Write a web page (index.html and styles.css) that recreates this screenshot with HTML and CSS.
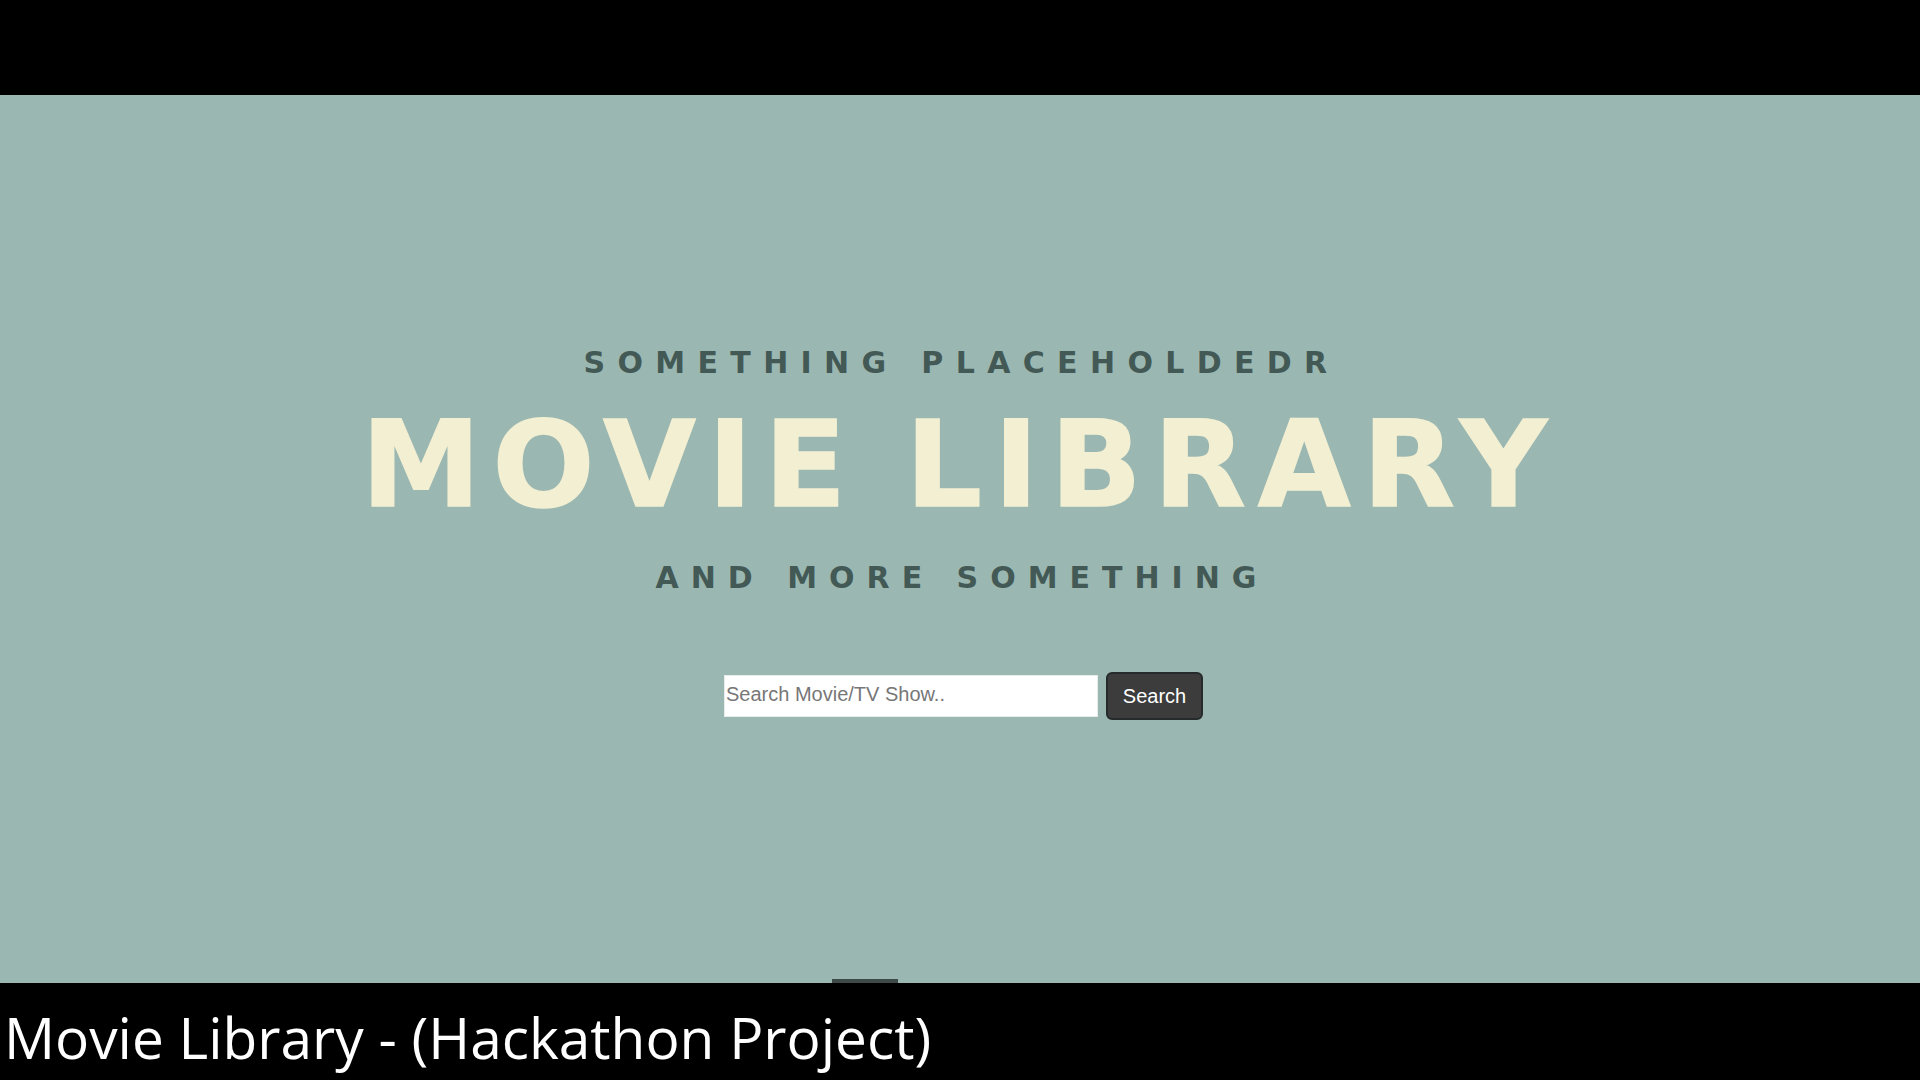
FILE: index.html
```html
<!DOCTYPE html>
<html lang="en">
<head>
<meta charset="utf-8">
<title>Movie Library</title>
<link rel="stylesheet" href="styles.css">
</head>
<body>
  <div class="topbar"></div>
  <main class="hero">
    <p class="kicker">SOMETHING PLACEHOLDEDR</p>
    <h1 class="title">MOVIE LIBRARY</h1>
    <p class="kicker kicker-2">AND MORE SOMETHING</p>
    <form class="search" onsubmit="return false;">
      <input class="search-input" type="text" placeholder="Search Movie/TV Show..">
      <button class="search-btn" type="submit">Search</button>
    </form>
    <div class="scroll-nub"></div>
  </main>
  <footer class="caption">
    <span class="caption-text">Movie Library - (Hackathon Project)</span>
  </footer>
</body>
</html>
```
FILE: styles.css
```css
html, body {
  margin: 0;
  padding: 0;
  background: #000;
  height: 1080px;
  overflow: hidden;
}

.topbar {
  height: 95px;
  background: #000;
}

.hero {
  height: 888px;
  box-sizing: border-box;
  background: #9bb7b1;
  display: flex;
  flex-direction: column;
  align-items: center;
  padding-top: 250px;
}

.kicker {
  margin: 0;
  font-family: "DejaVu Sans", Verdana, sans-serif;
  font-weight: bold;
  font-size: 30px;
  line-height: 36px;
  letter-spacing: 12.35px;
  color: #435955;
  padding-left: 3px;
}

.title {
  margin: 19px 0 0;
  font-family: "DejaVu Sans", Verdana, sans-serif;
  font-weight: bold;
  font-size: 120px;
  line-height: 130px;
  letter-spacing: 11.8px;
  word-spacing: -6px;
  padding-left: 0;
  color: #f3efd2;
  -webkit-text-stroke: 1.5px #f3efd2;
}

.kicker-2 {
  margin-top: 30px;
  letter-spacing: 12px;
  padding-left: 4px;
}

.search {
  margin: 76px 0 0 7px;
  display: flex;
  align-items: center;
  gap: 8px;
}

.search-input {
  width: 374px;
  height: 42px;
  box-sizing: border-box;
  border: 1px solid #e8ecea;
  background: #fff;
  padding: 0 1px 4px;
  font-family: "Liberation Sans", Arial, sans-serif;
  font-size: 20px;
  color: #333;
  outline: none;
}

.search-input::placeholder {
  color: #777;
}

.search-btn {
  width: 97px;
  height: 48px;
  box-sizing: border-box;
  background: #3c3c3c;
  border: 2px solid #262a2a;
  border-radius: 6px;
  color: #fff;
  font-family: "Liberation Sans", Arial, sans-serif;
  font-size: 20px;
  padding: 0;
}

.scroll-nub {
  margin-top: auto;
  align-self: flex-start;
  margin-left: 832px;
  width: 66px;
  height: 4px;
  background: #3d4a48;
}

.caption {
  height: 97px;
  background: #000;
  display: flex;
  align-items: flex-start;
}

.caption-text {
  margin: 22px 0 0 4px;
  font-family: "Open Sans", Lato, sans-serif;
  font-size: 56.8px;
  line-height: 64px;
  color: #fff;
}
```
